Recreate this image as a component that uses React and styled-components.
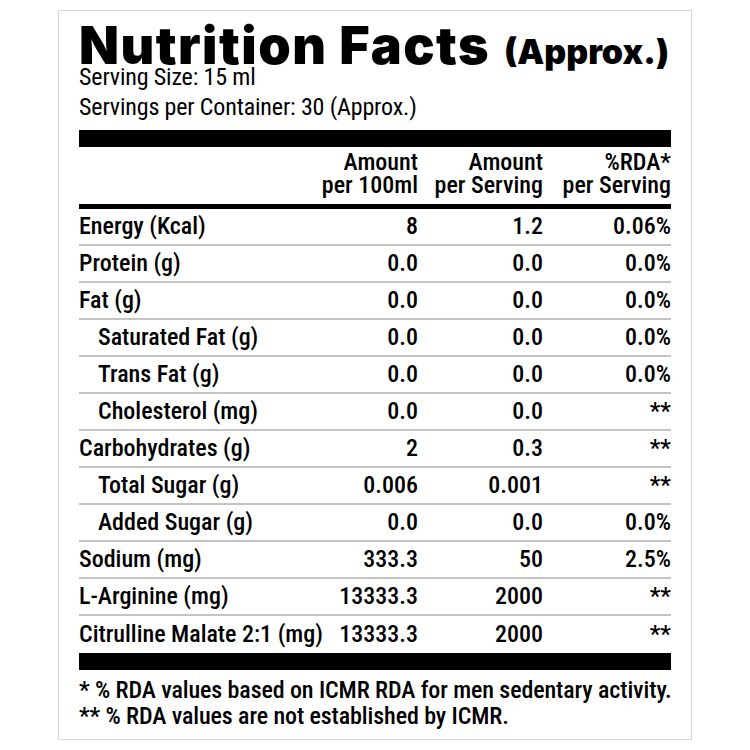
import React from "react";
import styled, { createGlobalStyle } from "styled-components";

const Global = createGlobalStyle`
  html, body { margin: 0; padding: 0; background: #ffffff; }
  body { font-family: Roboto, "Liberation Sans", sans-serif; font-stretch: 75%; color: #000; }
`;

const Card = styled.div`
  box-sizing: border-box;
  margin: 10px 0 0 58px;
  width: 634px;
  height: 730px;
  border: 1px solid #d6d6d6;
  padding: 18px 20px 0 20px;
  background: #fff;
`;

const TitleRow = styled.div`
  display: flex;
  align-items: baseline;
  gap: 14px;
  height: 33px;
  line-height: 33px;
  font-family: Inter, "Noto Sans", sans-serif;
  font-stretch: 100%;
  font-weight: 900;
  white-space: nowrap;
`;

const Title = styled.span`
  font-size: 52px;
  letter-spacing: 1.5px;
`;

const Approx = styled.span`
  font-size: 34px;
`;

const ServingLine = styled.div`
  font-size: 24px;
  line-height: 30px;
  font-weight: 400;
  letter-spacing: -0.15px;
  white-space: nowrap;
`;

const Bar = styled.div`
  height: ${(p) => p.$h}px;
  background: #000;
  margin-top: ${(p) => p.$mt || 0}px;
`;

const Grid = styled.div`
  display: grid;
  grid-template-columns: 242px 97px 125px 128px;
  align-items: center;
  box-sizing: border-box;
`;

const HeaderRow = styled(Grid)`
  padding: 4px 0 7px;
  font-size: 24px;
  line-height: 23px;
  font-weight: 500;
`;

const HeadLine = styled.div`
  line-height: 23px;
`;

const Row = styled(Grid)`
  height: 37px;
  padding-bottom: 2px;
  font-size: 24px;
  font-weight: 500;
  border-bottom: ${(p) => (p.$last ? "none" : "2px solid #c4c4c4")};
`;

const Cell = styled.div`
  text-align: ${(p) => (p.$left ? "left" : "right")};
  padding-left: ${(p) => (p.$indent ? 19 : 0)}px;
  white-space: nowrap;
`;

const Footer = styled.div`
  padding-top: 7px;
  font-size: 24px;
  line-height: 26px;
  font-weight: 500;
  letter-spacing: -0.1px;
`;

const FootLine = styled.div`
  white-space: nowrap;
`;

const rows = [
  ["Energy (Kcal)", "8", "1.2", "0.06%"],
  ["Protein (g)", "0.0", "0.0", "0.0%"],
  ["Fat (g)", "0.0", "0.0", "0.0%"],
  ["Saturated Fat (g)", "0.0", "0.0", "0.0%", true],
  ["Trans Fat (g)", "0.0", "0.0", "0.0%", true],
  ["Cholesterol (mg)", "0.0", "0.0", "**", true],
  ["Carbohydrates (g)", "2", "0.3", "**"],
  ["Total Sugar (g)", "0.006", "0.001", "**", true],
  ["Added Sugar (g)", "0.0", "0.0", "0.0%", true],
  ["Sodium (mg)", "333.3", "50", "2.5%"],
  ["L-Arginine (mg)", "13333.3", "2000", "**"],
  ["Citrulline Malate 2:1 (mg)", "13333.3", "2000", "**"],
];

const headers = [
  ["Amount", "per 100ml"],
  ["Amount", "per Serving"],
  ["%RDA*", "per Serving"],
];

export default function App() {
  return (
    <>
      <Global />
      <Card>
        <TitleRow>
          <Title>Nutrition Facts</Title>
          <Approx>(Approx.)</Approx>
        </TitleRow>
        <ServingLine>Serving Size: 15 ml</ServingLine>
        <ServingLine>Servings per Container: 30 (Approx.)</ServingLine>
        <Bar $h={17} $mt={8} />
        <HeaderRow>
          <Cell $left />
          {headers.map((h, i) => (
            <Cell key={i}>
              <HeadLine>{h[0]}</HeadLine>
              <HeadLine>{h[1]}</HeadLine>
            </Cell>
          ))}
        </HeaderRow>
        <Bar $h={5} />
        {rows.map((r, i) => (
          <Row key={r[0]} $last={i === rows.length - 1}>
            <Cell $left $indent={r[4]}>{r[0]}</Cell>
            <Cell>{r[1]}</Cell>
            <Cell>{r[2]}</Cell>
            <Cell>{r[3]}</Cell>
          </Row>
        ))}
        <Bar $h={17} />
        <Footer>
          <FootLine>* % RDA values based on ICMR RDA for men sedentary activity.</FootLine>
          <FootLine>** % RDA values are not established by ICMR.</FootLine>
        </Footer>
      </Card>
    </>
  );
}
